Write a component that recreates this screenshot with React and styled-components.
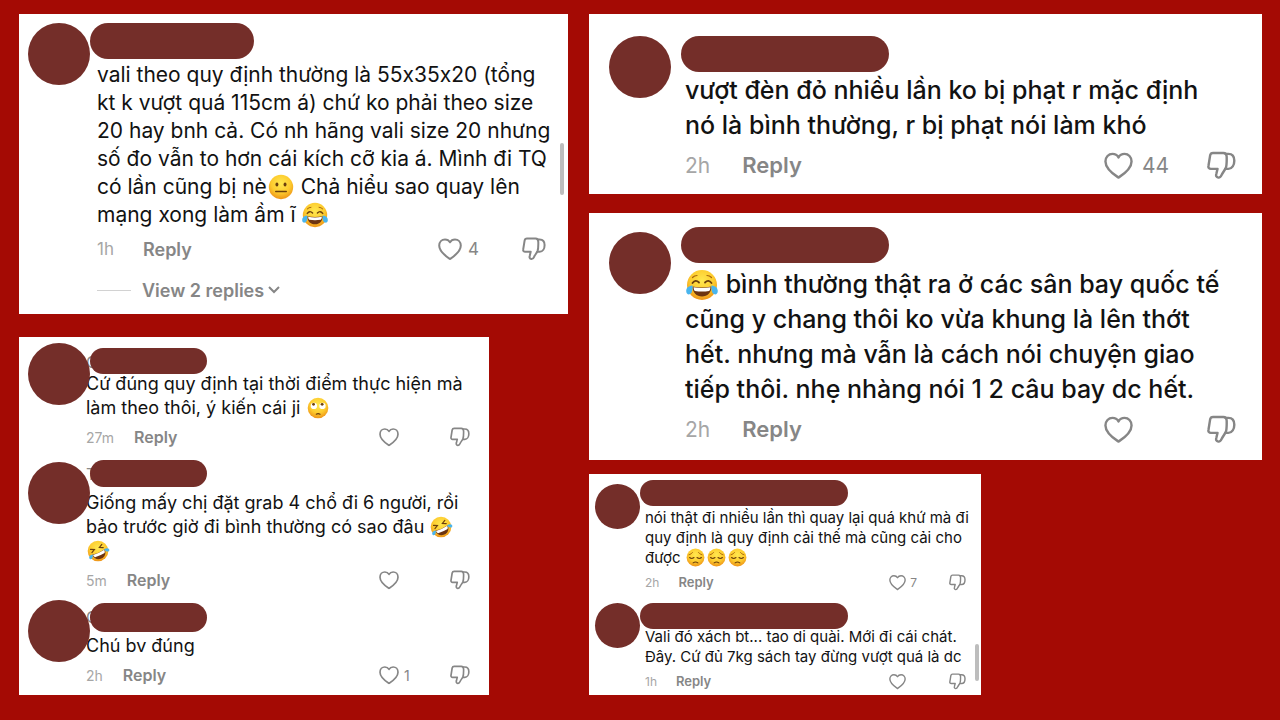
import { useId } from "react";
import styled, { createGlobalStyle, ThemeProvider } from "styled-components";

//#region sizes
const sizes = {
  medium: {
    avatar: 62, column: 62, nameIndent: 0, textIndent: 7,
    font: 21, weight: 400, line: 28, emoji: 26,
    meta: 18, time: 17, metaHeight: 32, metaTop: 4, replyGap: 29,
    icon: 24, likeWidth: 84, countGap: 6,
  },
  small: {
    avatar: 62, column: 58, nameIndent: 4, textIndent: 0,
    font: 18, weight: 400, line: 24, emoji: 22,
    meta: 16, time: 14, metaHeight: 24, metaTop: 5, replyGap: 20,
    icon: 20, likeWidth: 71, countGap: 5,
  },
  large: {
    avatar: 62, column: 72, nameIndent: 0, textIndent: 4,
    font: 25, weight: 500, line: 35, emoji: 32,
    meta: 22, time: 21, metaHeight: 30, metaTop: 7, replyGap: 32,
    icon: 29, likeWidth: 103, countGap: 9,
  },
  tiny: {
    avatar: 45, column: 45, nameIndent: 0, textIndent: 5,
    font: 15, weight: 400, line: 20, emoji: 19,
    meta: 13, time: 12, metaHeight: 18, metaTop: 5, replyGap: 19,
    icon: 17, likeWidth: 60, countGap: 4,
  },
};
//#endregion

//#region styled-components
const GlobalStyle = createGlobalStyle`
  * {
    box-sizing: border-box;
  }
  body {
    margin: 0;
    background-color: #a40a04;
    font-family: Inter, "Liberation Sans", sans-serif;
    /* keep the x in 55x35x20 a letter */
    font-variant-ligatures: no-contextual;
    color: #121212;
  }
`;

const Board = styled.main`
  min-height: 100vh;
  padding: 14px 18px 24px 19px;
  display: grid;
  grid-template-columns: 549fr 673fr;
  gap: 21px;
  align-items: start;
`;

const Column = styled.div`
  display: flex;
  flex-direction: column;
`;

const Card = styled.section`
  position: relative;
  width: ${({ $width }) => $width || "100%"};
  padding: ${({ $padding }) => $padding};
  margin-bottom: ${({ $gap }) => $gap || 0}px;
  display: flex;
  flex-direction: column;
  gap: 8px;
  background-color: #fff;
`;

// scroll thumb at the right side of a card
const ScrollThumb = styled.div`
  position: absolute;
  top: ${({ $top }) => $top};
  right: ${({ $right }) => $right}px;
  width: 4px;
  height: ${({ $height }) => $height}px;
  border-radius: 2px;
  background-color: #bdbdbd;
`;

const CommentRow = styled.article`
  display: grid;
  grid-template-columns: ${({ theme }) => theme.column}px minmax(0, 1fr);
`;

const Avatar = styled.div`
  z-index: 1;
  width: ${({ theme }) => theme.avatar}px;
  height: ${({ theme }) => theme.avatar}px;
  margin-top: ${({ $top }) => $top}px;
  border-radius: 50%;
  background-color: #742e29;
`;

const NameRow = styled.div`
  position: relative;
  height: ${({ $height }) => $height}px;
  padding-top: ${({ $top }) => $top}px;
  padding-left: ${({ theme }) => theme.nameIndent}px;
`;

const NameMask = styled.div`
  position: relative;
  width: ${({ $width }) => $width}px;
  height: ${({ $height }) => $height}px;
  border-radius: 18px;
  background-color: #742e29;
`;

// first letter that sticks out from under the mask
const NameInitial = styled.span`
  position: absolute;
  left: 0;
  font-size: 16px;
  line-height: 28px;
  color: #8a8a8a;
`;

const Indented = styled.div`
  padding-left: ${({ theme }) => theme.textIndent}px;
`;

const Text = styled.p`
  margin: 0;
  font-size: ${({ theme }) => theme.font}px;
  font-weight: ${({ theme }) => theme.weight};
  line-height: ${({ theme }) => theme.line}px;
  white-space: nowrap;
`;

const Line = styled.span`
  display: block;
  height: ${({ theme }) => theme.line}px;
`;

const EmojiSvg = styled.svg`
  width: ${({ theme }) => theme.emoji}px;
  height: ${({ theme }) => theme.emoji}px;
  margin: 0 1px 2px;
  vertical-align: middle;
  overflow: visible;
`;

const Meta = styled.footer`
  height: ${({ theme }) => theme.metaHeight}px;
  margin-top: ${({ theme }) => theme.metaTop}px;
  display: flex;
  align-items: center;
`;

const Time = styled.time`
  margin-right: ${({ theme }) => theme.replyGap}px;
  font-size: ${({ theme }) => theme.time}px;
  color: #a6a6a6;
`;

const PlainButton = styled.button`
  padding: 0;
  display: flex;
  align-items: center;
  border: none;
  background-color: transparent;
  font-family: inherit;
  font-size: ${({ theme }) => theme.meta}px;
  color: #868686;
`;

const ReplyButton = styled(PlainButton)`
  margin-right: auto;
  font-weight: 600;
`;

const LikeButton = styled(PlainButton)`
  width: ${({ theme }) => theme.likeWidth}px;
  gap: ${({ theme }) => theme.countGap}px;
  font-size: ${({ theme }) => theme.time}px;
`;

const Icon = styled.svg`
  width: ${({ theme }) => theme.icon}px;
  height: ${({ theme }) => theme.icon}px;
  fill: none;
  stroke: #868686;
  stroke-width: 2;
  stroke-linecap: round;
  stroke-linejoin: round;
`;

const RepliesButton = styled(PlainButton)`
  height: 24px;
  margin-top: 13px;
  font-weight: 600;
`;

const Dash = styled.span`
  width: 34px;
  height: 1px;
  margin-right: 11px;
  background-color: #d2d2d2;
`;

const Chevron = styled.svg`
  width: 12px;
  height: 8px;
  margin-left: 4px;
  fill: none;
  stroke: #868686;
  stroke-width: 2;
`;
//#endregion styled-components

//#region emoji
const faces = {
  neutral: (
    <>
      <ellipse cx="11" cy="13" rx="1.8" ry="2.5" fill="#6b3f0c" />
      <ellipse cx="21" cy="13" rx="1.8" ry="2.5" fill="#6b3f0c" />
      <path d="M9.5 21.5h13" stroke="#6b3f0c" strokeWidth="1.8" strokeLinecap="round" />
    </>
  ),
  joy: (
    <>
      <path d="M6.5 8.5q2-2 4.5-2M25.5 8.5q-2-2-4.5-2" stroke="#a8660d" strokeWidth="1.2" fill="none" strokeLinecap="round" />
      <path d="M6.5 14q3-4 6.5-.5M25.5 14q-3-4-6.5-.5" stroke="#6b3f0c" strokeWidth="1.8" fill="none" strokeLinecap="round" />
      <path d="M6.5 17.5q9.5 2 19 0c0 6-4 10-9.5 10s-9.5-4-9.5-10Z" fill="#6d3410" />
      <path d="M7.5 18.2q8.5 1.6 17 0-.2 3-1.4 3.7-7.1 1-14.2 0-1.2-.7-1.4-3.7Z" fill="#fff" />
      <path d="M6.5 16.5C2 17 .3 19 .2 22c0 2.5 1.6 3.8 3.4 3.3 2.7-.8 3.2-4.8 2.9-8.8ZM25.5 16.5c4.5.5 6.2 2.5 6.3 5.5 0 2.5-1.6 3.8-3.4 3.3-2.7-.8-3.2-4.8-2.9-8.8Z" fill="#49b5ee" />
    </>
  ),
  eyeroll: (
    <>
      <circle cx="10" cy="13" r="4.6" fill="#fff" />
      <circle cx="22.5" cy="13" r="4.6" fill="#fff" />
      <circle cx="9.5" cy="10.7" r="2.1" fill="#6b3f0c" />
      <circle cx="22" cy="10.7" r="2.1" fill="#6b3f0c" />
      <path d="M13.5 25q2.5-1.4 5.5 0" stroke="#6b3f0c" strokeWidth="1.7" fill="none" strokeLinecap="round" />
    </>
  ),
  rofl: (
    <g transform="rotate(-24 16 16)">
      <path d="m7 9.5 5 2.5-5 2.5M25 9.5l-5 2.5 5 2.5" stroke="#6b3f0c" strokeWidth="1.7" fill="none" strokeLinecap="round" />
      <path d="M6 17.5q10 2 20 0c0 6-4 10.5-10 10.5S6 23.5 6 17.5Z" fill="#6d3410" />
      <path d="M7 18.2q9 1.6 18 0-.2 3.4-1.4 4.3-7.6 1-15.2 0Q7.2 21.6 7 18.2Z" fill="#fff" />
      <path d="M7 17.5C3.5 16.500.5 18 .2 20c-.2 2 1.3 3.2 2.8 2.7 2-.5 3.3-2.7 4-5.2ZM25 17.5c3.5-1 6.5.5 6.8 2.5.2 2-1.3 3.2-2.8 2.7-2-.5-3.3-2.7-4-5.2Z" fill="#49b5ee" />
    </g>
  ),
  pensive: (
    <>
      <path d="M5 11.5q4-.8 6-4M27 11.5q-4-.8-6-4" stroke="#a8660d" strokeWidth="1.5" fill="none" strokeLinecap="round" />
      <path d="M6 16q3.5 3.2 7.5 0M26 16q-3.5 3.2-7.5 0" stroke="#6b3f0c" strokeWidth="1.8" fill="none" strokeLinecap="round" />
      <path d="M12 25q4-3 8 0" stroke="#6b3f0c" strokeWidth="1.8" fill="none" strokeLinecap="round" />
    </>
  ),
};

function Emoji({ name }) {
  const id = useId();
  return (
    <EmojiSvg viewBox="0 0 32 32" role="img" aria-label={name}>
      <radialGradient id={id} cx="50%" cy="35%" r="65%">
        <stop offset="0" stopColor="#ffe84f" />
        <stop offset="0.6" stopColor="#fdcb2e" />
        <stop offset="1" stopColor="#ee9418" />
      </radialGradient>
      <circle cx="16" cy="16" r="15" fill={`url(#${id})`} />
      {faces[name]}
    </EmojiSvg>
  );
}
//#endregion

function Heart() {
  return (
    <Icon viewBox="0 0 24 24">
      <path d="M12 22C9 20 1.2 15 1.2 8.6c0-3.7 2.6-6.2 5.8-6.2 2.2 0 4 1.1 5 2.9 1-1.8 2.8-2.9 5-2.9 3.2 0 5.8 2.5 5.8 6.2C22.8 15 15 20 12 22Z" />
    </Icon>
  );
}

function ThumbDown() {
  return (
    <Icon viewBox="0 0 24 24">
      <path d="M5 1.6h8.5c1.8 0 2.8 1.6 2.8 3.4 0 3.2.2 6.6-.8 9.2-1 2-2.6 3.8-3.4 5.6-.4 1-1.2 2.4-2.8 2.2-1.7-.2-2-1.6-1.6-3l1-4.2H3.2c-1.4 0-2.3-1-2-2.4L2.6 3.6C2.9 2.2 3.6 1.6 5 1.6Z" />
      <path d="M15.5 2.4h2.2c3 0 4.9 2 4.9 5.6s-1.8 6.8-4.9 6.8h-2.4" />
    </Icon>
  );
}

function Comment({ time, likes, lines, initial, mask, avatarTop = 0, nameTop = 0, nameHeight, children }) {
  return (
    <CommentRow>
      <Avatar $top={avatarTop} />
      <div>
        <NameRow $height={nameHeight} $top={nameTop}>
          {initial && <NameInitial>{initial}</NameInitial>}
          <NameMask $width={mask[0]} $height={mask[1]} />
        </NameRow>
        <Indented>
          <Text>
            {lines.map((line, i) => (
              <Line key={i}>{line}</Line>
            ))}
          </Text>
          <Meta>
            <Time>{time}</Time>
            <ReplyButton>Reply</ReplyButton>
            <LikeButton aria-label="Like">
              <Heart />
              {likes}
            </LikeButton>
            <PlainButton aria-label="Dislike">
              <ThumbDown />
            </PlainButton>
          </Meta>
          {children}
        </Indented>
      </div>
    </CommentRow>
  );
}

export default function App() {
  return (
    <Board>
      <GlobalStyle />
      <Column>
        <ThemeProvider theme={sizes.medium}>
          <Card $padding="9px 22px 12px 9px" $gap={23}>
            <Comment
              time="1h"
              likes={4}
              mask={[164, 36]}
              nameHeight={38}
              lines={[
                "vali theo quy định thường là 55x35x20 (tổng",
                "kt k vượt quá 115cm á) chứ ko phải theo size",
                "20 hay bnh cả. Có nh hãng vali size 20 nhưng",
                "số đo vẫn to hơn cái kích cỡ kia á. Mình đi TQ",
                <>có lần cũng bị nè<Emoji name="neutral" /> Chả hiểu sao quay lên</>,
                <>mạng xong làm ầm ĩ <Emoji name="joy" /></>,
              ]}
            >
              <RepliesButton>
                <Dash />
                View 2 replies
                <Chevron viewBox="0 0 12 8">
                  <path d="m1 1 5 5 5-5" />
                </Chevron>
              </RepliesButton>
            </Comment>
            <ScrollThumb $top="43%" $right={4} $height={52} />
          </Card>
        </ThemeProvider>

        <ThemeProvider theme={sizes.small}>
          <Card $width="85.6%" $padding="1px 19px 8px 9px">
            <Comment
              time="27m"
              initial="C"
              mask={[117, 26]}
              avatarTop={5}
              nameTop={10}
              nameHeight={34}
              lines={[
                "Cứ đúng quy định tại thời điểm thực hiện mà",
                <>làm theo thôi, ý kiến cái ji <Emoji name="eyeroll" /></>,
              ]}
            />
            <Comment
              time="5m"
              initial="T"
              mask={[117, 27]}
              avatarTop={5}
              nameTop={3}
              nameHeight={34}
              lines={[
                "Giống mấy chị đặt grab 4 chổ đi 6 người, rồi",
                <>bảo trước giờ đi bình thường có sao đâu <Emoji name="rofl" /></>,
                <Emoji name="rofl" />,
              ]}
            />
            <Comment
              time="2h"
              likes={1}
              initial="C"
              mask={[117, 29]}
              nameTop={3}
              nameHeight={34}
              lines={["Chú bv đúng"]}
            />
          </Card>
        </ThemeProvider>
      </Column>

      <Column>
        <ThemeProvider theme={sizes.large}>
          <Card $padding="22px 26px 14px 20px" $gap={19}>
            <Comment
              time="2h"
              likes={44}
              mask={[208, 36]}
              nameHeight={37}
              lines={[
                "vượt đèn đỏ nhiều lần ko bị phạt r mặc định",
                "nó là bình thường, r bị phạt nói làm khó",
              ]}
            />
          </Card>
          <Card $padding="14px 26px 16px 20px" $gap={14}>
            <Comment
              time="2h"
              mask={[208, 36]}
              avatarTop={5}
              nameHeight={40}
              lines={[
                <><Emoji name="joy" /> bình thường thật ra ở các sân bay quốc tế</>,
                "cũng y chang thôi ko vừa khung là lên thớt",
                "hết. nhưng mà vẫn là cách nói chuyện giao",
                "tiếp thôi. nhẹ nhàng nói 1 2 câu bay dc hết.",
              ]}
            />
          </Card>
        </ThemeProvider>

        <ThemeProvider theme={sizes.tiny}>
          <Card $width="58.3%" $padding="6px 15px 5px 6px">
            <Comment
              time="2h"
              likes={7}
              mask={[208, 26]}
              avatarTop={4}
              nameHeight={28}
              lines={[
                "nói thật đi nhiều lần thì quay lại quá khứ mà đi",
                "quy định là quy định cải thế mà cũng cải cho",
                <>được <Emoji name="pensive" /><Emoji name="pensive" /><Emoji name="pensive" /></>,
              ]}
            />
            <Comment
              time="1h"
              mask={[208, 26]}
              avatarTop={4}
              nameTop={4}
              nameHeight={28}
              lines={[
                "Vali đó xách bt... tao di quài. Mới đi cái chát.",
                "Đây. Cứ đủ 7kg sách tay đừng vượt quá là dc",
              ]}
            />
            <ScrollThumb $top="77%" $right={2} $height={37} />
          </Card>
        </ThemeProvider>
      </Column>
    </Board>
  );
}
